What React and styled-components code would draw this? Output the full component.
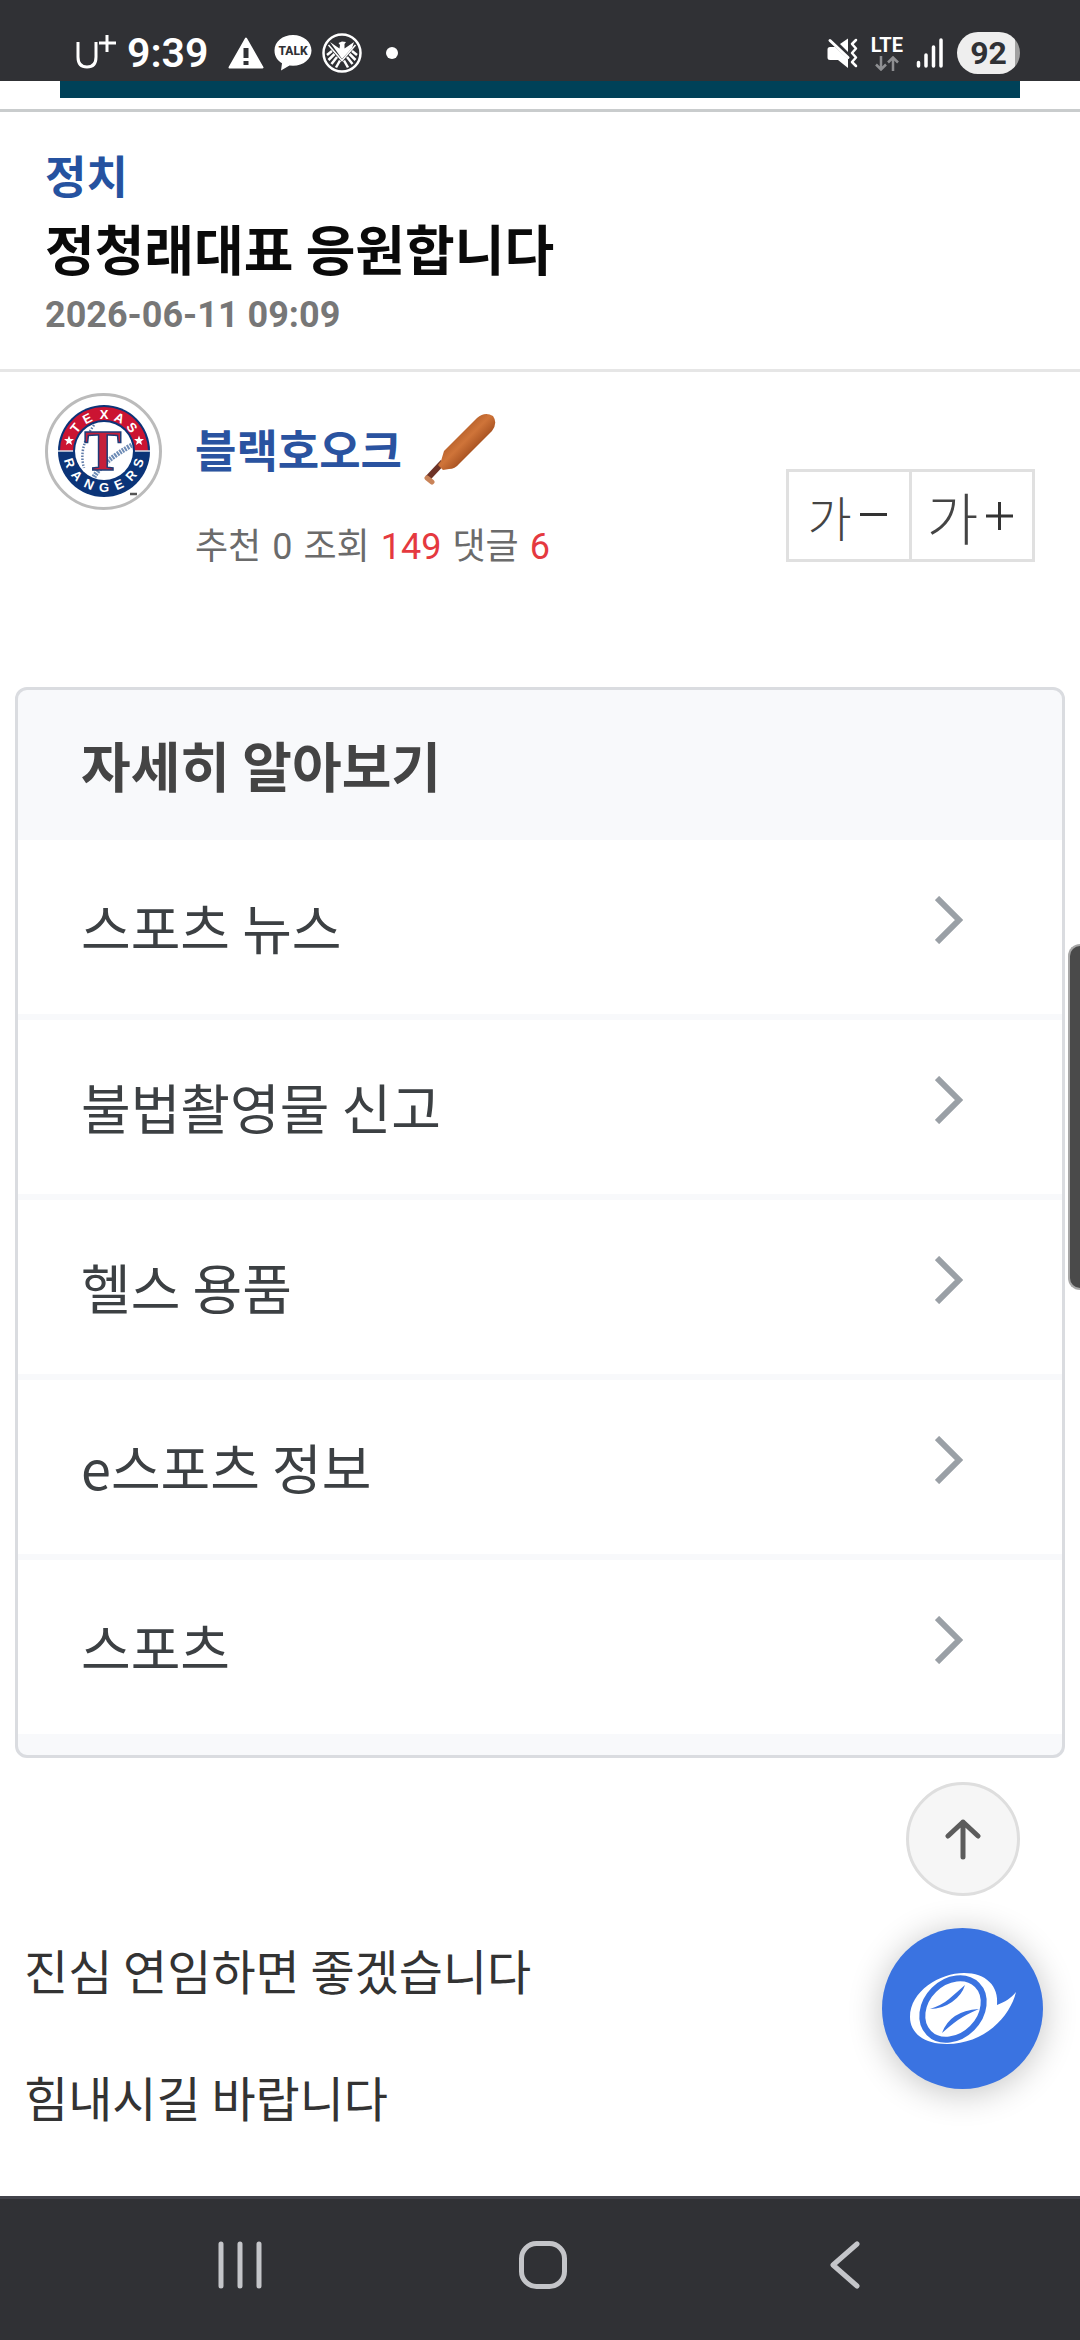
import styled, { createGlobalStyle } from 'styled-components';

const GlobalStyle = createGlobalStyle`
* {
    box-sizing: border-box;
}
body {
    margin: 0;
    background: #fff;
    font-family: "Noto Sans CJK KR", "Noto Sans", sans-serif;
}
h1, h2, p, ul {
    margin: 0;
    padding: 0;
}
button {
    margin: 0;
    padding: 0;
    border: 0;
    background: none;
    font-family: inherit;
    cursor: pointer;
}
a {
    color: inherit;
    text-decoration: none;
}
svg {
    display: block;
    flex-shrink: 0;
}`;

const Page = styled.div`
    display: flex;
    flex-direction: column;
    min-height: 100vh;
`;

const StatusBar = styled.header`
    display: flex;
    justify-content: space-between;
    height: 81px;
    padding: 25px 60px 0 75px;
    background: #303135;
    color: #fff;
    font-family: Roboto, sans-serif;
`;

const StatusGroup = styled.div`
    display: flex;
    align-items: center;
    height: 56px;
    gap: ${({ $gap }) => $gap}px;
`;

const Clock = styled.time`
    padding: 0 10px 0 1px;
    font-size: 41px;
    line-height: 56px;
    font-weight: 600;
`;

const Network = styled.div`
    display: flex;
    flex-direction: column;
    align-items: center;
    gap: 2px;
    font-size: 20px;
    line-height: 18px;
    font-weight: 700;
`;

const Battery = styled.span`
    width: 63px;
    height: 42px;
    border-radius: 21px;
    background: linear-gradient(to right, #eee 92%, #a0a0a0 92%);
    color: #303135;
    font-size: 32px;
    line-height: 42px;
    font-weight: 700;
    text-align: center;
`;

const Banner = styled.div`
    height: 31px;
    padding: 0 60px;
    border-bottom: 3px solid #c9cccd;
div {
    height: 17px;
    background: #004158;
}`;

const PostHeader = styled.section`
    padding: 30px 45px 27px;
    border-bottom: 3px solid #e6e6e6;
`;

const Category = styled.a`
    display: block;
    color: #2552a0;
    font-size: 45px;
    line-height: 66px;
    font-weight: 700;
`;

const Title = styled.h1`
    color: #0a0a0a;
    font-size: 54px;
    line-height: 80px;
    font-weight: 700;
`;

const PostDate = styled.time`
    display: block;
    color: #777;
    font-family: Roboto, sans-serif;
    font-size: 36px;
    line-height: 54px;
    font-weight: 700;
`;

const Author = styled.section`
    display: flex;
    align-items: flex-start;
    gap: 33px;
    padding: 21px 45px 0;
`;

const Avatar = styled.div`
    width: 117px;
    height: 117px;
    border: 3px solid #bbb;
    border-radius: 50%;
`;

const AuthorInfo = styled.div`
    flex: 1;
`;

const Name = styled.a`
    display: flex;
    align-items: center;
    gap: 21px;
    height: 112px;
    color: #2a53a0;
    font-size: 45px;
    line-height: 66px;
    font-weight: 700;
`;

const Stats = styled.p`
    display: flex;
    gap: 11px;
    padding-top: 18px;
    color: #6b6b6b;
    font-family: Roboto, "Noto Sans CJK KR", sans-serif;
    font-size: 36px;
    line-height: 48px;
em {
    color: #e5393f;
    font-style: normal;
}`;

const FontSizer = styled.div`
    display: flex;
    margin-top: 76px;
    border: 3px solid #e0e0e0;
`;

const SizeButton = styled.button`
    display: flex;
    align-items: center;
    justify-content: center;
    gap: 8px;
    width: ${({ $large }) => ($large ? 123 : 120)}px;
    height: 87px;
    padding-right: 4px;
    border-left: ${({ $large }) => ($large ? '3px solid #e0e0e0' : '0')};
    color: #444;
    font-size: ${({ $large }) => ($large ? 56 : 48)}px;
    line-height: 80px;
    font-weight: 300;
`;

const Card = styled.section`
    margin: 116px 15px 0;
    padding-bottom: 21px;
    border: 3px solid #dadce0;
    border-radius: 12px;
    background: #f8f9fb;
    overflow: hidden;
`;

const CardTitle = styled.h2`
    padding-left: 63px;
    color: #444;
    font-size: 54px;
    line-height: 150px;
    font-weight: 700;
`;

const LinkList = styled.ul`
    display: flex;
    flex-direction: column;
    gap: 6px;
    list-style: none;
`;

const CardLink = styled.a`
    display: flex;
    align-items: center;
    justify-content: space-between;
    height: 174px;
    padding: 0 99px 0 63px;
    background: #fff;
    color: #3c4043;
    font-size: 54px;
    line-height: 80px;
svg {
    margin-bottom: 14px;
}`;

const Content = styled.article`
    display: flex;
    flex: 1;
    flex-direction: column;
    gap: 55px;
    padding: 175px 24px 60px;
    color: #333;
    font-size: 48px;
    line-height: 72px;
`;

const Floating = styled.div`
    position: fixed;
    right: 37px;
    bottom: 251px;
    display: flex;
    flex-direction: column;
    align-items: center;
    gap: 32px;
`;

const TopButton = styled.button`
    display: grid;
    place-items: center;
    width: 114px;
    height: 114px;
    border: 3px solid #dedede;
    border-radius: 50%;
    background: #f6f6f6;
`;

const BallButton = styled.button`
    display: grid;
    place-items: center;
    width: 161px;
    height: 161px;
    border-radius: 50%;
    background: #3a73e1;
    box-shadow: 0 4px 34px rgba(0, 0, 0, 0.24);
`;

const EdgeHandle = styled.div`
    position: fixed;
    top: 944px;
    right: 0;
    width: 12px;
    height: 346px;
    border: 2px solid #a8a8a8;
    border-right: 0;
    border-radius: 14px 0 0 14px;
    background: #4a4a4a;
`;

const NavBar = styled.nav`
    display: flex;
    justify-content: space-between;
    height: 144px;
    padding: 0 199px 10px 204px;
    border-top: 3px solid #42434a;
    background: #303135;
`;

const NavButton = styled.button`
    display: grid;
    place-items: center;
    width: 72px;
`;

const links = ['스포츠 뉴스', '불법촬영물 신고', '헬스 용품', 'e스포츠 정보', '스포츠'];

const upperLetters = [
  ['T', -51], ['E', -27], ['X', 0], ['A', 25], ['S', 50],
];
const lowerLetters = [
  ['R', 71], ['A', 48], ['N', 24], ['G', 0], ['E', -24], ['R', -48], ['S', -71],
];

function Carrier() {
  return (
    <svg width="41" height="38" viewBox="0 0 41 38" fill="none" stroke="#fff" strokeWidth="3">
      <path d="M3 8v15q0 10 9 10t9-10V8" />
      <path d="M32 1v17M24 9h17" />
    </svg>
  );
}

function Warning() {
  return (
    <svg width="36" height="32" viewBox="0 0 36 32">
      <path d="M18 1.5 34.5 30.5h-33z" fill="#fff" stroke="#fff" strokeWidth="2" strokeLinejoin="round" />
      <path d="M18 11v10M18 24v4" stroke="#303135" strokeWidth="5" />
    </svg>
  );
}

function Talk() {
  return (
    <svg width="38" height="36" viewBox="0 0 38 36">
      <path d="M19 0C8.500 0 .5 6.700 .5 15.500c0 6 3.200 10.300 7.500 12.700L7 35.500l8.500-5 3.500.3c10.500 0 18.500-6.800 18.500-15.300S29.500 0 19 0z" fill="#fff" />
      <text x="19" y="20" textAnchor="middle" fontFamily="Roboto" fontSize="12" fontWeight="800" fill="#303135">TALK</text>
    </svg>
  );
}

function Eagle() {
  return (
    <svg width="40" height="40" viewBox="0 0 40 40" fill="none" stroke="#fff">
      <circle cx="20" cy="20" r="18.500" strokeWidth="2.500" />
      <path d="M8 9 14.500 13.500 17.500 15.500 18 12 16.500 10 20 8.500 24 9 22.500 11 22.500 15.500 25.500 13.500 32 9 30 15 20 26z" fill="#fff" stroke="none" />
      <path d="M6.500 12 20 27.500 33.500 12" strokeWidth="1.500" />
      <path d="M10 18l-5 4M12.500 21l-6 6M15 24l-5.500 7M18 27.500 14 34.500M30 18l5 4M27.500 21l6 6M25 24l5.500 7M22 27.500l4 7" strokeWidth="2.500" />
    </svg>
  );
}

function Muted() {
  return (
    <svg width="31" height="32" viewBox="0 0 31 32">
      <path d="M3 10h5l13 12v9L11 23H3q-2.500 0-2.500-2.500v-8Q.5 10 3 10zM13 7l8-5.500V15z" fill="#fff" />
      <path d="M3 3.500 21 20.500" stroke="#fff" strokeWidth="3" strokeLinecap="round" />
      <path d="M29 3l-4 4 4 4.500-4 4.500 4 4.500-4 4.500 4 4" fill="none" stroke="#fff" strokeWidth="2.500" strokeLinecap="round" strokeLinejoin="round" />
    </svg>
  );
}

function Signal() {
  return (
    <svg width="28" height="32" viewBox="0 0 28 32" stroke="#fff" strokeWidth="3.500" strokeLinecap="round">
      <path d="M2.500 25.500v3.500M10 18v11M17.500 10v19M25 3v26" />
    </svg>
  );
}

function TeamLogo() {
  return (
    <svg width="111" height="111" viewBox="0 0 111 111" fontFamily="Liberation Sans" fontWeight="700" textAnchor="middle">
      <circle cx="56" cy="55" r="46" fill="#0b3478" />
      <path d="M12 55a44 44 0 0 1 88 0z" fill="#cb1432" />
      <path d="M10 55h92" stroke="#d9dfea" strokeWidth="1.500" />
      <circle cx="56" cy="55" r="31" fill="#0b3478" />
      <circle cx="56" cy="55" r="29" fill="#fff" />
      <path d="M46 29Q30 52 36 72" fill="none" stroke="#5f7ba8" strokeWidth="2.500" strokeDasharray="1.500 1.500" />
      <path d="M46 81Q54 66 84 49" fill="none" stroke="#6d8bb5" strokeWidth="5" strokeDasharray="2 1" />
      <text x="55" y="74" fontFamily="Liberation Serif" fontSize="56" fill="#c5203a" stroke="#1c3c78" strokeWidth="1.500">T</text>
      {upperLetters.map(([letter, angle]) => (
        <text key={angle} x="56" y="23" fontSize="13" fill="#fff" transform={`rotate(${angle} 56 55)`}>{letter}</text>
      ))}
      {lowerLetters.map(([letter, angle]) => (
        <text key={angle} x="56" y="96" fontSize="13" fill="#fff" transform={`rotate(${angle} 56 55)`}>{letter}</text>
      ))}
      <path d="M21 39.500l1.300 3.400 3.700.2-2.900 2.300 1 3.600-3.100-2-3.100 2 1-3.600-2.900-2.300 3.700-.2z" fill="#fff" />
      <path d="M91 39.500l1.300 3.400 3.700.2-2.900 2.300 1 3.600-3.100-2-3.100 2 1-3.600-2.900-2.300 3.700-.2z" fill="#fff" />
      <path d="M82 98h7" stroke="#555" strokeWidth="2.500" />
    </svg>
  );
}

function Bat() {
  return (
    <svg width="75" height="72" viewBox="0 0 75 72">
      <defs>
        <linearGradient id="wood" gradientUnits="userSpaceOnUse" x1="32" y1="22" x2="48" y2="38">
          <stop offset="0" stopColor="#b55f2a" />
          <stop offset=".5" stopColor="#cf7439" />
          <stop offset="1" stopColor="#ad5725" />
        </linearGradient>
      </defs>
      <path d="M5 65 20 49" stroke="#6e3327" strokeWidth="6" />
      <path d="M4 65l5 4" stroke="#c98358" strokeWidth="5" strokeLinecap="round" />
      <path d="M18 48 21 38 54 5Q62-2 70 3q5 7-1 15L36 51Q32 56 26 56l-6 1-5-5z" fill="url(#wood)" />
    </svg>
  );
}

function Ball() {
  return (
    <svg width="106" height="72" viewBox="0 0 106 72">
      <path d="M0 44C0 18 30 0 54 0c22 0 35 13 33 32 8-3 14-7 19-13-6 25-32 52-69 52C14 71 0 60 0 44z" fill="#fff" />
      <ellipse cx="43" cy="36" rx="34" ry="27" transform="rotate(-45 43 36)" fill="#fff" stroke="#3a73e1" strokeWidth="6" />
      <path d="M20 36Q32 32 39 26T55 12Q52 22 42 29T20 36zM32 60Q36 49 45 43T69 36Q55 42 48 47T32 60z" fill="#3a73e1" />
    </svg>
  );
}

function App() {
  return (
    <Page>
      <GlobalStyle />
      <StatusBar>
        <StatusGroup $gap={10}>
          <Carrier />
          <Clock>9:39</Clock>
          <Warning />
          <Talk />
          <Eagle />
          <svg width="40" height="12" viewBox="0 0 40 12"><circle cx="20" cy="6" r="6" fill="#fff" /></svg>
        </StatusGroup>
        <StatusGroup $gap={13}>
          <Muted />
          <Network>
            LTE
            <svg width="24" height="15" viewBox="0 0 24 15" fill="none" stroke="#8e8f92" strokeWidth="2.500">
              <path d="M6 0v13M1 8.500l5 5 5-5M18 15V2M13 6.500l5-5 5 5" />
            </svg>
          </Network>
          <Signal />
          <Battery>92</Battery>
        </StatusGroup>
      </StatusBar>
      <Banner><div /></Banner>

      <PostHeader>
        <Category href="#">정치</Category>
        <Title>정청래대표 응원합니다</Title>
        <PostDate>2026-06-11 09:09</PostDate>
      </PostHeader>

      <Author>
        <Avatar><TeamLogo /></Avatar>
        <AuthorInfo>
          <Name href="#">블랙호오크 <Bat /></Name>
          <Stats>
            <span>추천</span> <span>0</span>
            <span>조회</span> <em>149</em>
            <span>댓글</span> <em>6</em>
          </Stats>
        </AuthorInfo>
        <FontSizer>
          <SizeButton>
            가
            <svg width="27" height="28" viewBox="0 0 27 28" stroke="#333" strokeWidth="3"><path d="M0 12.500h27" /></svg>
          </SizeButton>
          <SizeButton $large>
            가
            <svg width="27" height="28" viewBox="0 0 27 28" stroke="#333" strokeWidth="3"><path d="M0 14h27M13.500 0v28" /></svg>
          </SizeButton>
        </FontSizer>
      </Author>

      <Card>
        <CardTitle>자세히 알아보기</CardTitle>
        <LinkList>
          {links.map((text) => (
            <li key={text}>
              <CardLink href="#">
                {text}
                <svg width="28" height="48" viewBox="0 0 28 48" fill="none" stroke="#9aa0a6" strokeWidth="6">
                  <path d="M2 2l22 22L2 46" />
                </svg>
              </CardLink>
            </li>
          ))}
        </LinkList>
      </Card>

      <Content>
        <p>진심 연임하면 좋겠습니다</p>
        <p>힘내시길 바랍니다</p>
      </Content>

      <NavBar>
        <NavButton aria-label="최근 앱">
          <svg width="46" height="48" viewBox="0 0 46 48" stroke="#c4c5c9" strokeWidth="5" strokeLinecap="round">
            <path d="M4 3v42M23 3v42M42 3v42" />
          </svg>
        </NavButton>
        <NavButton aria-label="홈">
          <svg width="48" height="48" viewBox="0 0 48 48" fill="none" stroke="#c4c5c9" strokeWidth="5">
            <rect x="2.500" y="2.500" width="43" height="43" rx="15" />
          </svg>
        </NavButton>
        <NavButton aria-label="뒤로">
          <svg width="32" height="48" viewBox="0 0 32 48" fill="none" stroke="#c4c5c9" strokeWidth="5" strokeLinecap="round" strokeLinejoin="round">
            <path d="M28 3 4 24l24 21" />
          </svg>
        </NavButton>
      </NavBar>

      <EdgeHandle />
      <Floating>
        <TopButton aria-label="맨 위로">
          <svg width="36" height="42" viewBox="0 0 36 42" fill="none" stroke="#5c5c5c" strokeWidth="5" strokeLinecap="round" strokeLinejoin="round">
            <path d="M18 39V4M3 18 18 4l15 14" />
          </svg>
        </TopButton>
        <BallButton aria-label="메뉴"><Ball /></BallButton>
      </Floating>
    </Page>
  );
}

export default App;
